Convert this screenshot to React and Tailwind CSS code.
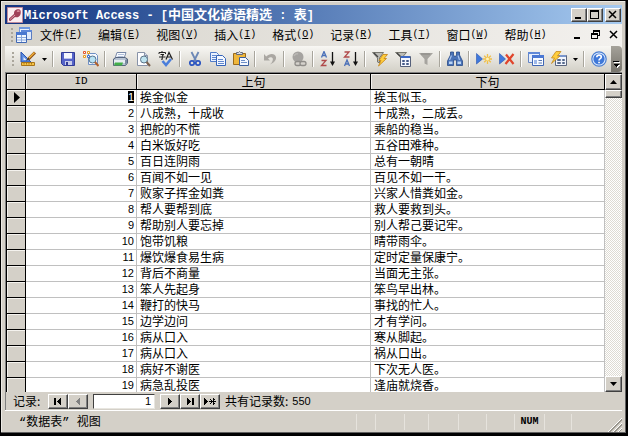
import React, { useState } from "react";

const rows = [
  ["挨金似金", "挨玉似玉。"],
  ["八成熟，十成收", "十成熟，二成丢。"],
  ["把舵的不慌", "乘船的稳当。"],
  ["白米饭好吃", "五谷田难种。"],
  ["百日连阴雨", "总有一朝晴"],
  ["百闻不如一见", "百见不如一干。"],
  ["败家子挥金如粪", "兴家人惜粪如金。"],
  ["帮人要帮到底", "救人要救到头。"],
  ["帮助别人要忘掉", "别人帮己要记牢。"],
  ["饱带饥粮", "晴带雨伞。"],
  ["爆饮爆食易生病", "定时定量保康宁。"],
  ["背后不商量", "当面无主张。"],
  ["笨人先起身", "笨鸟早出林。"],
  ["鞭打的快马", "事找的忙人。"],
  ["边学边问", "才有学问。"],
  ["病从口入", "寒从脚起。"],
  ["病从口入", "祸从口出。"],
  ["病好不谢医", "下次无人医。"],
  ["病急乱投医", "逢庙就烧香。"],
];

const menus = [
  ["文件", "F"],
  ["编辑", "E"],
  ["视图", "V"],
  ["插入", "I"],
  ["格式", "O"],
  ["记录", "R"],
  ["工具", "T"],
  ["窗口", "W"],
  ["帮助", "H"],
];

// Small 16x16 drawings for the toolbar
const Icon = ({ children, className = "" }) => (
  <svg viewBox="0 0 16 16" className={`w-4 h-4 shrink-0 ${className}`} aria-hidden="true">
    {children}
  </svg>
);

const DesignIcon = () => (
  <Icon>
    <path d="M1 1v10h10z" fill="#5b8be0" stroke="#2b55b0" />
    <path d="M3.5 6v3h3z" fill="#e8f0ff" />
    <path d="M15 1.5 8 8.5" stroke="#8a4a10" strokeWidth="3" />
    <path d="M14.5 1.5 8 8" stroke="#f3b43c" strokeWidth="1.5" />
    <path d="M8.500 6.500 6 10l3.500-2z" fill="#333" />
    <path d="M1.500 11.500h13v3h-13z" fill="#f6c445" stroke="#a8741a" />
    <path d="M4 12v1.500M6.500 12v1.500M9 12v1.500M11.500 12v1.500" stroke="#8a5a10" strokeWidth=".7" />
  </Icon>
);

const SaveIcon = () => (
  <Icon>
    <path d="M1.500 1.500h13v13h-11l-2-2z" fill="#5563c8" stroke="#323c96" />
    <path d="M4 2h8v6H4z" fill="#f4f6fd" />
    <path d="M4 7h8v1H4z" fill="#b9c0ea" />
    <path d="M5 10h7v4H5z" fill="#c9cdea" />
    <path d="M6 11h2v3H6z" fill="#323c96" />
  </Icon>
);

const FileSearchIcon = () => (
  <Icon>
    <path d="M5.500 2.500h7l2 2v9h-9z" fill="#f5f8ff" stroke="#6f8fc4" />
    <path d="M.5.5h2v2h-2z" fill="#fff" stroke="#e2552c" />
    <path d="M4.500.5h2v2h-2z" fill="#fff" stroke="#e89a1c" />
    <path d="M.5 4.500h2v2h-2z" fill="#fff" stroke="#e89a1c" />
    <path d="M4.500 4.500h2v2h-2z" fill="#fff" stroke="#3d6fd0" />
    <circle cx="9.500" cy="8.500" r="3.500" fill="#b8e2f4" stroke="#57768f" />
    <path d="m12 11 3.500 4" stroke="#b0602c" strokeWidth="2" />
  </Icon>
);

const PrintIcon = () => (
  <Icon>
    <path d="M5 1.500h9l-2 6H3z" fill="#fafcff" stroke="#7788a8" />
    <path d="M6 3.500h6M5.500 5.500h6" stroke="#9db0d0" strokeWidth=".8" />
    <path d="M1.500 8 4 6.500h9L15.500 8v4l-2 2.500h-12z" fill="#b8c4d4" stroke="#56657e" />
    <path d="M2 9h11v3H2z" fill="#e6ecf2" />
    <path d="M3 11.500h8l-1 3H2z" fill="#44b04a" />
    <path d="M13 9l2-1v4l-2 2z" fill="#7b8ba2" />
  </Icon>
);

const PreviewIcon = () => (
  <Icon>
    <path d="M2.500 1.500h7l3 3v10h-10z" fill="#fdfdff" stroke="#8893a8" />
    <path d="M9.500 1.500v3h3" fill="#d8deec" stroke="#8893a8" />
    <circle cx="9" cy="8.500" r="3.500" fill="#bfe4f0" stroke="#5b7388" />
    <path d="m11.500 11 3.500 4" stroke="#7a6250" strokeWidth="2" />
  </Icon>
);

const SpellIcon = () => (
  <Icon>
    <path d="M4 0v1M1 3V1.500h6.500V3M2.500 3.500h3.500L4 5M1 6h6.500M4.300 5v3.500L3 8" fill="none" stroke="#222" />
    <path d="m8 8.500 3-7 3.500 7M9 6h4.500" fill="none" stroke="#222" strokeWidth="1.200" />
    <path d="m4.500 10 3.500 4 5-6" fill="none" stroke="#4a7edb" strokeWidth="2.600" />
  </Icon>
);

const CutIcon = () => (
  <Icon>
    <path d="M4.500 1 9 10M11.500 1 7 10" stroke="#6b87b5" strokeWidth="1.800" />
    <circle cx="5" cy="12" r="2.200" fill="none" stroke="#2b55c0" strokeWidth="1.700" />
    <circle cx="11" cy="12" r="2.200" fill="none" stroke="#2b55c0" strokeWidth="1.700" />
  </Icon>
);

const CopyIcon = () => (
  <Icon>
    <path d="M.5 1.500h6l2 2v7h-8z" fill="#eaf2ff" stroke="#4f7bc8" />
    <path d="M2 4.500h4M2 6.500h4M2 8.500h4" stroke="#4f7bc8" strokeWidth=".9" />
    <path d="M6.500 4.500h6l3 3v7h-9z" fill="#f4f8ff" stroke="#3564b8" />
    <path d="M8 8.500h5M8 10.500h6M8 12.500h6" stroke="#4f7bc8" strokeWidth=".9" />
  </Icon>
);

const PasteIcon = () => (
  <Icon>
    <path d="M.500 2.500h12v11H.500z" fill="#efb73c" stroke="#9a6a1a" />
    <path d="M3.500 3.500v-2h2l1-1 1 1h2v2z" fill="#d9dce4" stroke="#666c7c" />
    <path d="M6.500 6.500h6l3 3v5h-9z" fill="#f4f8ff" stroke="#3b5f9e" />
    <path d="M8 9.500h4M8 11.500h6" stroke="#6d8fc8" />
  </Icon>
);

const UndoIcon = () => (
  <Icon>
    <path d="M2 3v6.500h6L6 7.500C9 5 12 6.500 10.500 10c-.5 1.500-1.500 2.500-2.500 3.500C12 12 14.500 9 14 6 13 2 7.500 2 4.200 5.500z" fill="#aaa7a2" />
  </Icon>
);

const LinkIcon = () => (
  <Icon>
    <circle cx="7" cy="6" r="5.500" fill="#a5a3a0" />
    <path d="M3 5c1-2 3-2.500 4-2" fill="none" stroke="#bab8b4" strokeWidth="1.500" />
    <rect x="4" y="10.500" width="6" height="4" rx="2" fill="#d5d2cc" stroke="#8f8d89" strokeWidth="1.300" />
    <rect x="9" y="10.500" width="6" height="4" rx="2" fill="#d5d2cc" stroke="#8f8d89" strokeWidth="1.300" />
  </Icon>
);

const A_PATH = "m1.500 6.500 2.500-6 2.500 6M2.500 4.500h3";
const Z_PATH = "M1.500 1h4.500l-4.500 5h5";

const SortIcon = ({ desc }) => (
  <Icon>
    <g fill="none" strokeWidth="1.300">
      <path d={desc ? Z_PATH : A_PATH} stroke={desc ? "#b04a4a" : "#4a70b8"} />
      <path d={desc ? A_PATH : Z_PATH} stroke={desc ? "#4a70b8" : "#b04a4a"} transform="translate(0 8.500)" />
    </g>
    <path d="M12.500 1v11" stroke="#111" strokeWidth="1.300" />
    <path d="M10 10.500h5L12.500 15z" fill="#111" />
  </Icon>
);

const FilterBoltIcon = () => (
  <Icon>
    <path d="M.5 1.500h11L7.500 7v5l-2-1V7z" fill="#bcbcb6" stroke="#77776f" />
    <path d="m2 2 4 4" stroke="#444" strokeWidth="1.200" />
    <path d="M11 3.500h4.500L12 7.500h2.500L6.500 15 9 9.500H7z" fill="#ffcf3d" stroke="#c98a1c" strokeWidth=".9" />
  </Icon>
);

const FilterFormIcon = () => (
  <Icon>
    <path d="M.5 1.500h11L7.500 6v5l-2-1V6z" fill="#bcbcb6" stroke="#77776f" />
    <path d="m2 2 4 4" stroke="#444" strokeWidth="1.200" />
    <path d="M5.500 5.500h10v10h-10z" fill="#f5f8ff" stroke="#55607a" />
    <path d="M6 5h9v2H6z" fill="#3c68c4" />
    <path d="M7.500 9.500h2v1h-2zM7.500 12.500h2v1h-2zM11.500 9.500h2v1h-2zM11.500 12.500h2v1h-2z" fill="none" stroke="#445a88" />
  </Icon>
);

const FilterIcon = () => (
  <Icon>
    <path d="M1 2h14L9.500 8v6l-3-1.500V8z" fill="#a6a49f" />
    <path d="M3 3h9" stroke="#8a8884" />
  </Icon>
);

const FindIcon = () => (
  <Icon>
    <path d="M3.500 1h3v3l1.500 2 1.500-2V1h3v3l3 6v4.500h-6V9h-3v5.500h-6V10l3-6z" fill="#4a73b8" stroke="#274a88" strokeWidth=".8" />
    <path d="M2 10.500h3.500v2.500H2zM10.500 10.500H14v2.500h-3.500z" fill="#b9d4f4" />
    <path d="M4.500 4.500 2.500 9M11 4.500 12.500 9" stroke="#a9c4ee" strokeWidth="1.200" />
  </Icon>
);

const NewRecordIcon = () => (
  <Icon>
    <path d="M.5 2.500 6.500 8l-6 5z" fill="#3f78dc" stroke="#2a56b0" strokeWidth=".6" />
    <path d="M11.500 3v10M7 8h9M8.200 4.700l6.600 6.600M14.800 4.700l-6.600 6.600" stroke="#f0c04a" strokeWidth="1.300" />
    <circle cx="11.500" cy="8" r="1.500" fill="#fff3b8" />
  </Icon>
);

const DeleteRecordIcon = () => (
  <Icon>
    <path d="M.5 2.500 6.500 8l-6 5z" fill="#3f78dc" stroke="#2a56b0" strokeWidth=".6" />
    <path d="M7 3.500 14.500 13M14.500 3 6.500 13" stroke="#e0452c" strokeWidth="2.200" />
  </Icon>
);

const DatabaseIcon = () => (
  <Icon>
    <path d="M.5 1.500h11v10H.500z" fill="#e6eefc" stroke="#6485c4" />
    <path d="M0 1h12v2H0z" fill="#5f88d8" />
    <path d="M4.500 4.500h11v10h-11z" fill="#f8fbff" stroke="#3f66b4" />
    <path d="M4 4h12v3H4z" fill="#4a78d4" />
    <path d="M6 9h3v4H6z" fill="#9db8ea" />
    <path d="M10.500 9.500H14M10.500 12H14" stroke="#5878b4" />
  </Icon>
);

const NewObjectIcon = () => (
  <Icon>
    <path d="M4.500 4.500h11v10h-11z" fill="#f2f5fc" stroke="#5a657e" />
    <path d="M5 4h10v2H5z" fill="#7a96cc" />
    <path d="M6.500 8.500h3v1h-3zM6.500 11.500h3v1h-3zM11.500 8.500h2v1h-2zM11.500 11.500h2v1h-2z" fill="none" stroke="#55688c" />
    <path d="M5 .5h5L6.500 5H9L.5 12.500 3.500 7h-3z" fill="#ffce3c" stroke="#c68a1c" strokeWidth=".8" />
  </Icon>
);

const HelpIcon = () => (
  <Icon>
    <circle cx="8" cy="8" r="7.200" fill="#dceaff" stroke="#4a7ed0" strokeWidth="1.200" />
    <circle cx="8" cy="8" r="5.600" fill="#3f78d8" />
    <path d="M5.800 6.300c0-3 4.500-2.800 4.500-.2 0 1.600-2.300 1.600-2.300 3.400" fill="none" stroke="#fff" strokeWidth="1.600" />
    <path d="M7.200 10.700h1.700v1.600H7.200z" fill="#fff" />
  </Icon>
);

const DatasheetIcon = ({ className }) => (
  <Icon className={className}>
    <path d="M3.500.5h10v9h-10z" fill="#e8f0fc" stroke="#7c9cd6" />
    <path d="M3 0h11v2H3z" fill="#6f98e0" />
    <path d="M5.500 3.500h10v9h-10z" fill="#dfe9fb" stroke="#5a7cc0" />
    <path d="M5 3h11v2H5z" fill="#5c86d8" />
    <path d="M.5 5.500h10v10H.5z" fill="#f2f7ff" stroke="#4068b4" />
    <path d="M0 5h11v3H0z" fill="#4a78d0" />
    <path d="M1 10.500h9M1 13h9M5.500 8v7" stroke="#8ba9dc" />
  </Icon>
);

const AccessIcon = () => (
  <Icon>
    <path d="M.5.5h15v15H.5z" fill="#fbeef0" stroke="#c08c9c" />
    <path d="M8 3.500C10 1.500 13 2 13.500 3.500S14 8 12 9.500c-1.500 1-3 1-4 .5l-4.500 4-1.500-.5v-2L7 7c0-1.500 0-2.500 1-3.500z" fill="#a04058" />
    <path d="m3 12.500 5-4.500" stroke="#e0a0ac" />
    <path d="M10 4.500c1-.8 2-.5 2.500 0" fill="none" stroke="#dc98a4" strokeWidth="1.500" />
  </Icon>
);

const Sep = () => (
  <div className="flex w-[6px] justify-center shrink-0">
    <div className="h-4 w-px bg-[#a8a59c]" />
    <div className="h-4 w-px bg-white" />
  </div>
);

const Grip = () => (
  <div className="flex flex-col gap-[2px] shrink-0">
    <i className="size-[2px] bg-[#aaa69c]" />
    <i className="size-[2px] bg-[#aaa69c]" />
    <i className="size-[2px] bg-[#aaa69c]" />
    <i className="size-[2px] bg-[#aaa69c]" />
  </div>
);

const Tool = ({ label, children }) => (
  <button aria-label={label} className="flex h-[22px] w-[23px] items-center justify-center shrink-0">
    {children}
  </button>
);

const DropArrow = ({ label }) => (
  <button aria-label={label} className="flex h-[22px] w-[11px] items-center justify-center shrink-0">
    <svg viewBox="0 0 5 3" className="w-[5px] h-[3px]"><path d="M0 0h5L2.500 3z" /></svg>
  </button>
);

// Raised grey button with the classic 3D edge
const Raised = ({ label, className = "", children }) => (
  <button
    aria-label={label}
    className={`flex items-center justify-center shrink-0 bg-[#d4d0c8] border border-t-white border-l-white border-r-[#404040] border-b-[#404040] shadow-[inset_-1px_-1px_0_#808080] ${className}`}
  >
    {children}
  </button>
);

const Glyph = ({ children, className = "" }) => (
  <svg viewBox="0 0 14 10" className={`w-[14px] h-[10px] ${className}`} shapeRendering="crispEdges" aria-hidden="true">
    {children}
  </svg>
);

const TitleBar = () => (
  <header className="flex h-[19px] shrink-0 items-center bg-linear-to-r from-[#143480] to-[#a6caf0] pl-[2px] pr-px text-white">
    <AccessIcon />
    <h1 className="ml-px flex-1 truncate whitespace-pre text-[13px] font-bold leading-[18px]">
      <span className="font-['Liberation_Mono'] text-[12px]">Microsoft Access - [</span>
      中国文化谚语精选
      <span className="font-['Liberation_Mono'] text-[12px]"> : </span>
      表
      <span className="font-['Liberation_Mono'] text-[12px]">]</span>
    </h1>
    <div className="flex text-black">
      <Raised label="最小化" className="h-[14px] w-4">
        <Glyph><path d="M3 7h6v2H3z" /></Glyph>
      </Raised>
      <Raised label="最大化" className="h-[14px] w-4">
        <Glyph><path d="M2 0h9v9H2zM3 2v6h7V2z" fillRule="evenodd" /></Glyph>
      </Raised>
      <Raised label="关闭" className="ml-[2px] h-[14px] w-4">
        <Glyph><path d="m3 1 7 7M10 1 3 8" stroke="#000" strokeWidth="1.500" shapeRendering="auto" /></Glyph>
      </Raised>
    </div>
  </header>
);

const MenuBar = () => (
  <nav className="flex h-[22px] shrink-0 items-center bg-linear-to-r from-[#d6d3cb] to-[#f3f1ee] pl-[6px] pr-[2px]">
    <Grip />
    <DatasheetIcon className="ml-[3px]" />
    <div className="ml-2 flex flex-1 gap-4">
      {menus.map(([name, key]) => (
        <button key={key} className="flex items-center whitespace-nowrap leading-4">
          {name}
          <span className="font-['Liberation_Mono'] text-[10px]">
            (<u>{key}</u>)
          </span>
        </button>
      ))}
    </div>
    <div className="flex gap-1">
      <button aria-label="最小化窗口"><Glyph><path d="M4 7h6v2H4z" /></Glyph></button>
      <button aria-label="还原窗口">
        <Glyph><path d="M5 0h7v6h-2V5h1V2H6v1H5zM3 3h7v6H3zM4 5v3h5V5z" fillRule="evenodd" /></Glyph>
      </button>
      <button aria-label="关闭窗口">
        <Glyph><path d="m4 1 7 7M11 1 4 8" stroke="#000" strokeWidth="1.500" shapeRendering="auto" /></Glyph>
      </button>
    </div>
  </nav>
);

const Toolbar = () => (
  <div className="flex h-[26px] shrink-0 items-stretch bg-linear-to-b from-[#f8f7f4] to-[#d3d0c7]">
    <div className="flex flex-1 items-center pl-[7px]">
      <Grip />
      <div className="flex items-center pl-[2px]">
        <Tool label="设计视图"><DesignIcon /></Tool>
        <DropArrow label="更多视图" />
        <Sep />
        <Tool label="保存"><SaveIcon /></Tool>
        <Tool label="文件搜索"><FileSearchIcon /></Tool>
        <Sep />
        <Tool label="打印"><PrintIcon /></Tool>
        <Tool label="打印预览"><PreviewIcon /></Tool>
        <Tool label="拼写检查"><SpellIcon /></Tool>
        <Sep />
        <Tool label="剪切"><CutIcon /></Tool>
        <Tool label="复制"><CopyIcon /></Tool>
        <Tool label="粘贴"><PasteIcon /></Tool>
        <Sep />
        <Tool label="撤消"><UndoIcon /></Tool>
        <Sep />
        <Tool label="插入超链接"><LinkIcon /></Tool>
        <Sep />
        <Tool label="升序排序"><SortIcon /></Tool>
        <Tool label="降序排序"><SortIcon desc /></Tool>
        <Sep />
        <Tool label="按选定内容筛选"><FilterBoltIcon /></Tool>
        <Tool label="按窗体筛选"><FilterFormIcon /></Tool>
        <Tool label="应用筛选"><FilterIcon /></Tool>
        <Sep />
        <Tool label="查找"><FindIcon /></Tool>
        <Sep />
        <Tool label="新记录"><NewRecordIcon /></Tool>
        <Tool label="删除记录"><DeleteRecordIcon /></Tool>
        <Sep />
        <Tool label="数据库窗口"><DatabaseIcon /></Tool>
        <Tool label="新对象"><NewObjectIcon /></Tool>
        <DropArrow label="更多对象" />
        <Sep />
        <Tool label="帮助"><HelpIcon /></Tool>
      </div>
    </div>
    <button aria-label="工具栏选项" className="flex w-[11px] items-end justify-center rounded-r-sm bg-linear-to-b from-[#a5a29a] to-[#77746c] pb-1">
      <svg viewBox="0 0 7 7" className="w-[7px] h-[7px]" shapeRendering="crispEdges">
        <path d="M1 1h6v1H1zM2 4h5L4.500 7z" fill="#fff" />
        <path d="M0 0h6v1H0zM1 3h5L3.500 6z" />
      </svg>
    </button>
  </div>
);

const headCell = "h-4 border-b border-r border-black bg-[#d4d0c8] p-0 font-normal leading-[15px] shadow-[inset_1px_1px_0_#f4f2ee]";
const bodyCell = "h-4 border-b border-r border-[#c0c0c0] bg-white py-0 align-top leading-[14px] whitespace-nowrap";

const DataSheet = ({ current }) => (
  <div className="flex min-h-0 flex-1">
    <div className="min-w-0 flex-1 overflow-hidden bg-white">
      <table className="w-full table-fixed border-separate border-spacing-0">
        <colgroup>
          <col className="w-[19px]" />
          <col className="w-[111px]" />
          <col />
          <col />
        </colgroup>
        <thead>
          <tr>
            <th className={headCell} aria-label="选择" />
            <th className={`${headCell} font-['Liberation_Mono'] text-[11px]`}>ID</th>
            <th className={headCell}>上句</th>
            <th className={headCell}>下句</th>
          </tr>
        </thead>
        <tbody>
          {rows.map(([first, second], i) => (
            <tr key={i}>
              <td className="h-4 border-b border-r border-black bg-[#d4d0c8] p-0 shadow-[inset_1px_1px_0_#f4f2ee]">
                {i + 1 === current && (
                  <svg viewBox="0 0 6 11" className="ml-[7px] h-[11px] w-[6px]"><path d="M0 0l6 5.500L0 11z" /></svg>
                )}
              </td>
              <td className={`${bodyCell} pr-[2px] text-right font-['Liberation_Sans'] text-[11px]`}>
                {i + 1 === current ? <span className="bg-black text-white">1</span> : i + 1}
              </td>
              <td className={`${bodyCell} pl-[3px]`}>{first}</td>
              <td className={`${bodyCell} pl-[3px]`}>{second}</td>
            </tr>
          ))}
        </tbody>
      </table>
    </div>
    <div className="flex w-[17px] shrink-0 flex-col bg-[repeating-conic-gradient(#dedbd3_0_25%,#fff_0_50%)] bg-size-[2px_2px]">
      <Raised label="向上滚动" className="h-4">
        <svg viewBox="0 0 7 4" className="h-1 w-[7px]"><path d="M3.500 0 7 4H0z" /></svg>
      </Raised>
      <Raised label="滚动块" className="h-2" />
      <div className="flex-1" />
      <Raised label="向下滚动" className="h-4">
        <svg viewBox="0 0 7 4" className="h-1 w-[7px]"><path d="M0 0h7L3.500 4z" /></svg>
      </Raised>
    </div>
  </div>
);

const RecordBar = ({ current, setCurrent }) => (
  <div className="flex h-[18px] shrink-0 items-center bg-[#d4d0c8] pl-[7px] leading-4">
    <label htmlFor="record" className="w-[35px]">记录:</label>
    <Raised label="第一条记录" className="h-[15px] w-5">
      <Glyph><path d="M3 2h2v7H3zM10 2v7L6 5.500z" /></Glyph>
    </Raised>
    <Raised label="上一条记录" className="h-[15px] w-5">
      <Glyph><path d="M9 2v7L5 5.500z" fill="#808080" /></Glyph>
    </Raised>
    <input
      id="record"
      value={current}
      onChange={(e) => setCurrent(Number(e.target.value) || 1)}
      className="mx-[5px] h-[15px] w-[62px] border border-t-[#404040] border-l-[#404040] border-r-[#e8e6e0] border-b-[#e8e6e0] bg-white pr-[3px] text-right font-['Liberation_Sans'] text-[11px] outline-none"
    />
    <Raised label="下一条记录" className="h-[15px] w-5">
      <Glyph><path d="M5 2v7l4-3.500z" /></Glyph>
    </Raised>
    <Raised label="最后一条记录" className="h-[15px] w-5">
      <Glyph><path d="M4 2v7l4-3.500zM9 2h2v7H9z" /></Glyph>
    </Raised>
    <Raised label="新增记录" className="h-[15px] w-5">
      <Glyph><path d="M1 2v7l4-3.500z" /><path d="M10 2v7M6 5.500h7M7 3l5 5M12 3 7 8" stroke="#000" /></Glyph>
    </Raised>
    <p className="ml-[5px] flex gap-1">
      共有记录数: <span className="font-['Liberation_Sans'] text-[11px]">550</span>
    </p>
  </div>
);

const Pane = ({ className, children }) => (
  <div className={`h-4 shrink-0 border-l border-[#e6e3dd] text-center ${className}`}>{children}</div>
);

const StatusBar = () => (
  <footer className="flex h-[22px] shrink-0 items-center border-t border-white bg-[#d4d0c8]">
    <p className="flex-1 pl-[14px] leading-4">
      <span className="font-['Liberation_Mono']">“</span>
      数据表
      <span className="font-['Liberation_Mono']">” </span>
      视图
    </p>
    <Pane className="w-[19px]" />
    <Pane className="w-[29px]" />
    <Pane className="w-6" />
    <Pane className="w-[30px]" />
    <Pane className="w-7" />
    <Pane className="w-[28px]" />
    <Pane className="w-[30px] font-['Liberation_Mono'] text-[10px] font-bold leading-4">NUM</Pane>
    <Pane className="w-[27px]" />
    <Pane className="w-[37px]" />
    <svg viewBox="0 0 14 14" className="h-[14px] w-[14px] shrink-0 self-end" aria-hidden="true">
      <path d="M0 14 14 0M5 14l9-9M10 14l4-4" stroke="#fff" />
      <path d="M1 14 14 1M2 14 14 2M6 14l8-8M7 14l7-7M11 14l3-3" stroke="#8a877e" strokeWidth=".8" />
    </svg>
  </footer>
);

const App = () => {
  const [current, setCurrent] = useState(1);

  return (
    <div className="flex h-screen flex-col overflow-hidden border-t border-r-2 border-b-3 border-l border-black bg-[#d4d0c8] font-['Noto_Sans_CJK_SC',sans-serif] text-[12px] text-black">
      <div className="flex min-h-0 flex-1 flex-col border-r border-b border-[#606060] pt-1 pr-[3px] pl-1 shadow-[inset_1px_1px_0_#eceae5]">
        <TitleBar />
        <MenuBar />
        <Toolbar />
        <main className="flex min-h-0 flex-1 flex-col border-t border-l border-[#808080]">
          <div className="flex min-h-0 flex-1 border-t border-l border-black">
            <DataSheet current={current} />
          </div>
          <RecordBar current={current} setCurrent={setCurrent} />
        </main>
        <StatusBar />
      </div>
    </div>
  );
};

export default App;
